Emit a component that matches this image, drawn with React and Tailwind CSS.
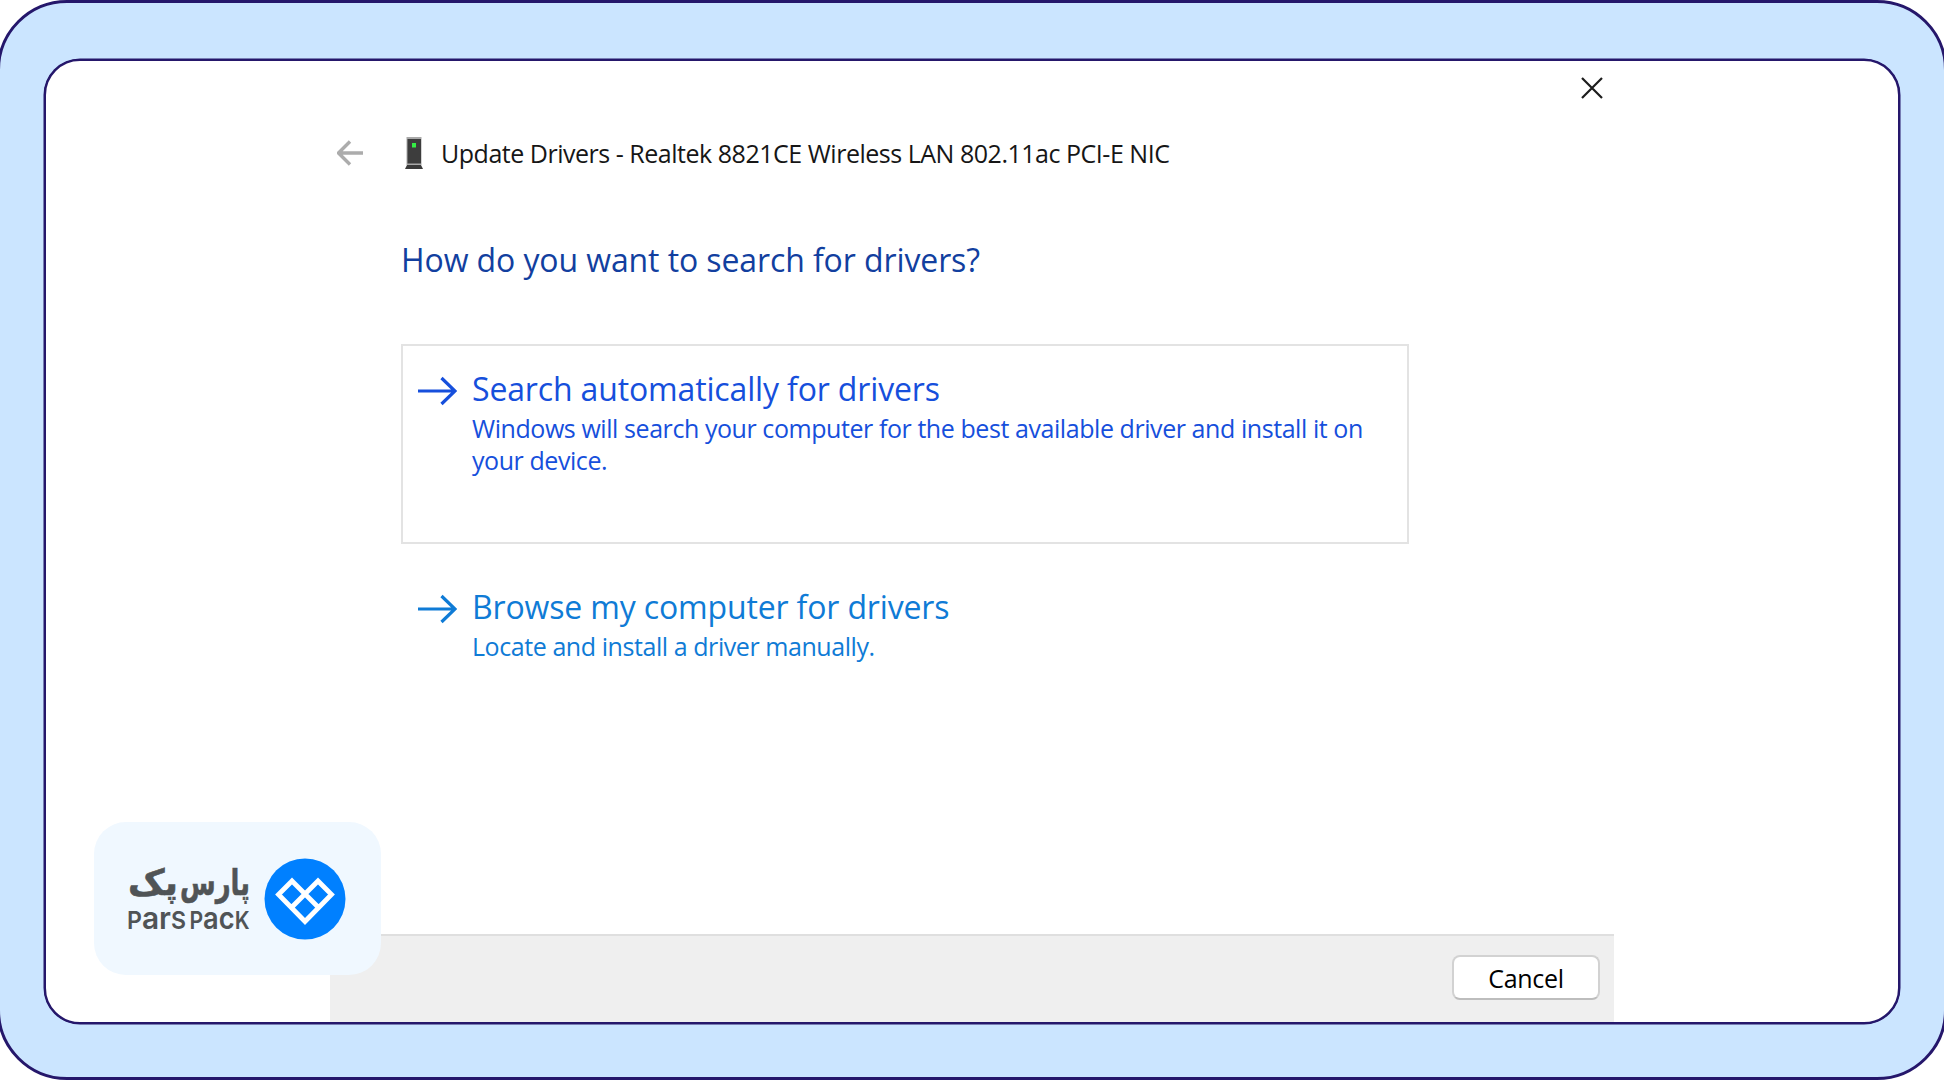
import React from "react";

const options = [
  {
    title: "Search automatically for drivers",
    lines: [
      "Windows will search your computer for the best available driver and install it on",
      "your device.",
    ],
    box: "h-[200px] border-[#e3e3e3] text-[#164fdc]",
  },
  {
    title: "Browse my computer for drivers",
    lines: ["Locate and install a driver manually."],
    box: "mt-[18px] h-[140px] border-transparent text-[#0f7bd6]",
  },
];

function ArrowIcon() {
  return (
    <svg width="40" height="30" viewBox="0 0 40 30" fill="none" className="mt-[7px] shrink-0">
      <path d="M1 15H38M24.5 2L38 15L24.5 28" stroke="currentColor" strokeWidth="3.2" />
    </svg>
  );
}

function DeviceIcon() {
  return (
    <svg width="18" height="33" viewBox="0 0 18 33">
      <rect x="1.5" y="0" width="15" height="28" fill="#a9a9a9" />
      <rect x="2.5" y="2" width="13.5" height="24.5" fill="#3d3d3d" />
      <rect x="7" y="6" width="4" height="4.5" fill="#35ef45" />
      <path d="M2 28H16L18 32H0Z" fill="#3a3a3a" />
    </svg>
  );
}

function Option({ option }) {
  return (
    <button className={`flex w-[1008px] items-start border-2 pt-[23px] pl-[14px] text-left ${option.box}`}>
      <ArrowIcon />
      <div className="ml-[15px]">
        <p className="text-[32px] leading-10 tracking-[-0.15px] whitespace-nowrap">{option.title}</p>
        <div className="mt-[3px] text-[25px] leading-8 tracking-[-0.43px]">
          {option.lines.map((line) => (
            <p key={line} className="whitespace-nowrap">
              {line}
            </p>
          ))}
        </div>
      </div>
    </button>
  );
}

function BrandName() {
  return (
    <svg width="124" height="90" viewBox="0 0 124 90" fill="#505456" className="overflow-visible">
      <g
        direction="rtl"
        fontFamily="DejaVu Sans, sans-serif"
        fontWeight="700"
        fontSize="36"
        stroke="#505456"
        strokeWidth="0.6"
      >
        <text x="122" y="41" textLength="70" lengthAdjust="spacingAndGlyphs">
          پارس
        </text>
        <text x="50" y="41" textLength="50" lengthAdjust="spacingAndGlyphs">
          پک
        </text>
      </g>
      <g fontFamily="Inter, sans-serif" fontWeight="600" fontSize="31">
        <text x="-1" y="75" textLength="59" lengthAdjust="spacingAndGlyphs">
          <tspan fontSize="24">P</tspan>ar<tspan fontSize="24">S</tspan>
        </text>
        <text x="61.5" y="75" textLength="60" lengthAdjust="spacingAndGlyphs">
          <tspan fontSize="24">P</tspan>ac<tspan fontSize="24">K</tspan>
        </text>
      </g>
    </svg>
  );
}

function Brand() {
  return (
    <div className="absolute top-[761px] left-[48px] flex h-[153px] w-[287px] items-center rounded-[32px] bg-[#f0f8ff] pl-[34px]">
      <BrandName />
      <svg width="82" height="82" viewBox="0 0 82 82" className="ml-[12px]">
        <circle cx="41" cy="41" r="40.5" fill="#0080ff" />
        <path
          d="M28 23L14.5 36.5L41 63.5L67.5 36.5L54 23L27.5 49.5M28 23L54.5 49.5M27 24L28 23L29 24M53 24L54 23L55 24"
          fill="none"
          stroke="#fff"
          strokeWidth="4.8"
        />
      </svg>
    </div>
  );
}

export default function App() {
  return (
    <div className="h-[1080px] w-full overflow-hidden bg-white font-['Open_Sans',sans-serif]">
      <div className="-mx-[3px] h-[1080px] rounded-[70px] border-[3px] border-[#25176b] bg-[#cbe5ff] px-[44px] pt-[56px]">
        <div className="relative h-[965px] rounded-[36px] border-2 border-[#25176b] bg-white pl-[284px] shadow-[0_0_0_0.5px_#25176b]">
          <div className="flex h-[961px] w-[1284px] flex-col">
            <div className="flex h-11 justify-end pt-[16px] pr-[11px]">
              <svg width="22" height="22" viewBox="0 0 22 22">
                <path d="M1 1L21 21M21 1L1 21" stroke="#1c1c1c" strokeWidth="2.2" />
              </svg>
            </div>

            <div className="flex h-24 items-center pl-[7px]">
              <svg width="26" height="26" viewBox="0 0 26 26" fill="none">
                <path d="M26 13H2M13 1.5L1.5 13L13 24.5" stroke="#acacac" strokeWidth="3.4" />
              </svg>
              <div className="ml-[42px]">
                <DeviceIcon />
              </div>
              <h1 className="ml-[18px] text-[25px] leading-8 tracking-[-0.48px] whitespace-nowrap text-[#161616]">
                Update Drivers - Realtek 8821CE Wireless LAN 802.11ac PCI-E NIC
              </h1>
            </div>

            <div className="flex-1 pt-[39px] pl-[71px]">
              <h2 className="mb-[64px] text-[32px] leading-10 tracking-[-0.1px] whitespace-nowrap text-[#123f9f]">
                How do you want to search for drivers?
              </h2>
              {options.map((option) => (
                <Option key={option.title} option={option} />
              ))}
            </div>

            <div className="flex h-[88px] items-start justify-end border-t-2 border-[#dfdfdf] bg-[#efefef] pt-[19px] pr-[14px]">
              <button className="h-[45px] w-[148px] rounded-[8px] border-2 border-[#d2d2d2] border-b-[#bdbdbd] bg-white text-[25px] leading-8 tracking-[-0.3px] text-black">
                Cancel
              </button>
            </div>
          </div>

          <Brand />
        </div>
      </div>
    </div>
  );
}
